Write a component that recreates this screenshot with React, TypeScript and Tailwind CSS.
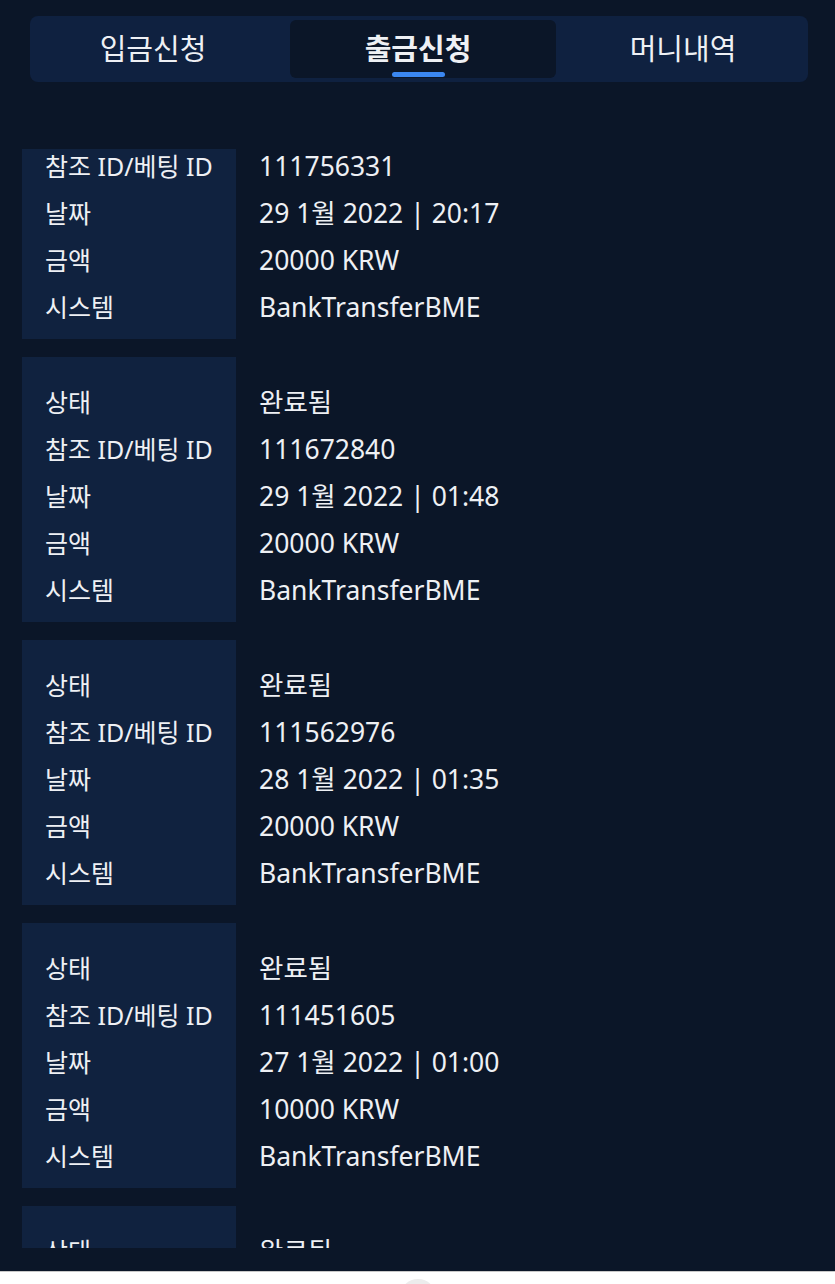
import React from "react";

type Row = { label: string; value: string };

const records: Row[][] = [
  ["111756331", "29 1월 2022 | 20:17", "20000 KRW"],
  ["111672840", "29 1월 2022 | 01:48", "20000 KRW"],
  ["111562976", "28 1월 2022 | 01:35", "20000 KRW"],
  ["111451605", "27 1월 2022 | 01:00", "10000 KRW"],
  ["111340218", "26 1월 2022 | 02:11", "20000 KRW"],
].map(([id, date, amount]) => [
  { label: "상태", value: "완료됨" },
  { label: "참조 ID/베팅 ID", value: id },
  { label: "날짜", value: date },
  { label: "금액", value: amount },
  { label: "시스템", value: "BankTransferBME" },
]);

const tabs = [
  { name: "입금신청", active: false, cls: "pr-[18px]" },
  { name: "출금신청", active: true, cls: "pr-[10px]" },
  { name: "머니내역", active: false, cls: "pl-[6px]" },
];

// list is scrolled: first card starts at the ID row, last one only peeks in
const RecordCard = ({ rows, first }: { rows: Row[]; first?: boolean }) => {
  const pad = first ? "-mt-[6px] pb-[8px]" : "pt-[22px] pb-[8px]";
  return (
    <div className="grid grid-cols-[214px_1fr] overflow-hidden">
      <div className="bg-[#10223f] pl-[23px]">
        <div className={pad}>
          {rows.map((r) => (
            <div key={r.label} className="h-[47px] leading-[47px] whitespace-nowrap">
              {r.label}
            </div>
          ))}
        </div>
      </div>
      <div className="pl-[23px] text-[26.5px]">
        <div className={pad}>
          {rows.map((r) => (
            <div key={r.label} className="h-[47px] leading-[47px] whitespace-nowrap">
              {r.value}
            </div>
          ))}
        </div>
      </div>
    </div>
  );
};

const App = () => {
  const last = records.length - 1;
  return (
    <div
      className="flex h-[1284px] w-[835px] flex-col overflow-hidden bg-[#0b1628] text-[#eef0f4]"
      style={{ fontFamily: '"Noto Sans", "Noto Sans CJK KR", sans-serif' }}
    >
      <div className="pl-[30px] pr-[27px] pt-[16px]">
        <div className="grid h-[66px] grid-cols-[256px_266px_1fr] rounded-[8px] bg-[#0f2140] p-[4px]">
          {tabs.map((t) => (
            <div
              key={t.name}
              className={`relative flex items-center justify-center rounded-[6px] text-[29px] ${t.cls} ${
                t.active ? "bg-[#0b1628] font-bold" : ""
              }`}
            >
              {t.name}
              {t.active && (
                <span className="absolute bottom-[1px] left-[102px] h-[5px] w-[53px] rounded-full bg-[#3b87f0]" />
              )}
            </div>
          ))}
        </div>
      </div>

      <div className="mt-[67px] h-[1099px] overflow-hidden px-[22px] text-[25px]">
        <div className="flex flex-col gap-[18px]">
          {records.map((rows, i) => (
            <RecordCard
              key={i}
              rows={i === 0 ? rows.slice(1) : i === last ? rows.slice(0, 1) : rows}
              first={i === 0}
            />
          ))}
        </div>
      </div>

      <div className="h-[23px]" />

      <div className="flex flex-1 justify-center overflow-hidden border-t border-[#c8c8c8] bg-white">
        <div className="mt-[7px] h-[36px] w-[36px] shrink-0 rounded-full bg-[#ececec]" />
      </div>
    </div>
  );
};

export default App;
